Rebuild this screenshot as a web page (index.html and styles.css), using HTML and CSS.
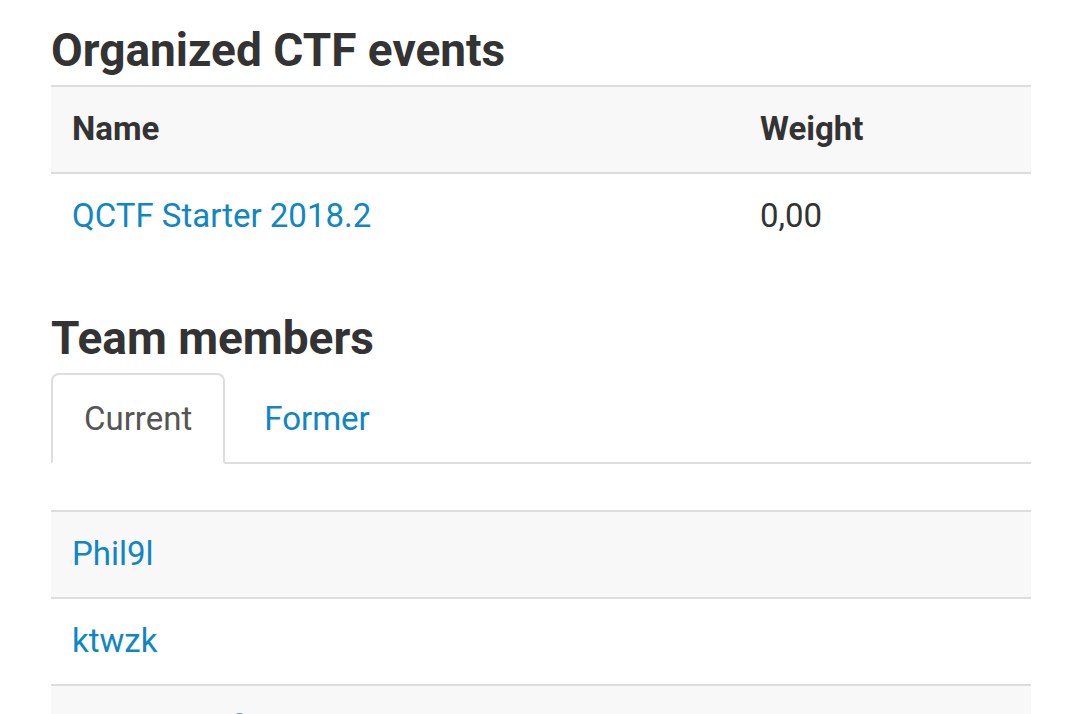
FILE: index.html
```html
<!DOCTYPE html>
<html lang="en">
<head>
  <meta charset="UTF-8" />
  <title>Team</title>
  <link rel="stylesheet" href="styles.css">
</head>
<body>
  <div class="container">
    <h3>Organized CTF events</h3>
    <table class="table">
      <thead>
        <tr>
          <th class="col-name">Name</th>
          <th>Weight</th>
        </tr>
      </thead>
      <tbody>
        <tr>
          <td><a href="#">QCTF Starter 2018.2</a></td>
          <td>0,00</td>
        </tr>
      </tbody>
    </table>

    <h3 class="members-title">Team members</h3>
    <ul class="nav-tabs">
      <li class="active"><a href="#">Current</a></li>
      <li><a href="#">Former</a></li>
    </ul>

    <div class="tab-content">
      <table class="table table-striped">
        <tbody>
          <tr><td><a href="#">Phil9l</a></td></tr>
          <tr><td><a href="#">ktwzk</a></td></tr>
          <tr><td><a href="#">cerenamarfil</a></td></tr>
        </tbody>
      </table>
    </div>
  </div>
</body>
</html>
```

FILE: styles.css
```css
* {
  box-sizing: border-box;
  margin: 0;
  padding: 0;
}

body {
  font-family: Roboto, "Noto Sans", sans-serif;
  font-size: 33px;
  line-height: 1.43;
  color: #333;
  background-color: #fff;
  overflow: hidden;
}

a {
  color: #1086c3;
  text-decoration: none;
}

.container {
  width: 980px;
  margin-left: 51px;
}

h3 {
  font-size: 46px;
  font-weight: 700;
  line-height: 1.1;
  margin-top: 25px;
  margin-bottom: 9px;
}

.members-title {
  margin-top: 54px;
  margin-bottom: 9px;
}

.table {
  width: 100%;
  border-collapse: collapse;
  border-top: 2px solid #ddd;
}

.table th,
.table td {
  text-align: left;
  padding: 18px 21px 20px;
  vertical-align: top;
}

.table th {
  font-weight: 700;
  background-color: #f8f8f8;
  border-bottom: 2px solid #ddd;
}

.col-name {
  width: 688px;
}

.table-striped td {
  border-bottom: 2px solid #ddd;
}

.table-striped tr:nth-child(odd) td {
  background-color: #f8f8f8;
}

.nav-tabs {
  list-style: none;
  display: flex;
  border-bottom: 2px solid #ddd;
}

.nav-tabs li {
  margin-bottom: -2px;
  margin-right: 6px;
}

.nav-tabs a {
  display: block;
  padding: 20px 31px;
  border: 2px solid transparent;
  border-radius: 8px 8px 0 0;
}

.nav-tabs .active a {
  color: #555;
  background-color: #fff;
  border-color: #ddd;
  border-bottom-color: transparent;
}

.tab-content {
  padding-top: 46px;
}
```
